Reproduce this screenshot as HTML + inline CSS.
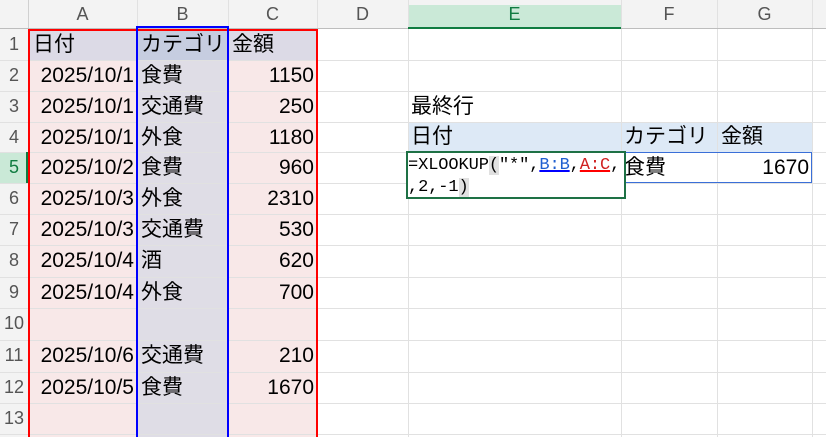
<!DOCTYPE html>
<html style="overflow:hidden;width:826px;height:437px"><head><meta charset="utf-8"><style>
*{margin:0;padding:0;box-sizing:border-box}
body{width:826px;height:437px;overflow:hidden;background:#fff;position:relative;font-family:"Liberation Sans","Noto Sans CJK JP",sans-serif;font-size:21px;color:#000}
div{position:absolute}
.vl{top:0;height:437px;width:1px;background:#e1e1e1}
.hl{left:0;width:826px;height:1px;background:#e1e1e1}
.rn{left:0;width:28px;text-align:center;font-size:18px;color:#555;line-height:31px}
.ch{top:0;height:29px;line-height:29px;text-align:center;font-size:18px;color:#555}
.t{line-height:31px;white-space:nowrap}
.r{text-align:right}
</style></head><body>
<div style="left:28px;top:29px;width:109px;height:408px;background:#f8e8e8"></div>
<div style="left:137px;top:29px;width:91px;height:408px;background:#dfdde6"></div>
<div style="left:228px;top:29px;width:89px;height:408px;background:#f8e8e8"></div>
<div style="left:28px;top:29px;width:289px;height:31px;background:#dcdae6"></div>
<div style="left:137px;top:29px;width:91px;height:31px;background:#c6cde0"></div>
<div style="left:408px;top:122px;width:404px;height:30px;background:#dde9f6"></div>
<div style="left:0;top:0;width:826px;height:29px;background:#f3f3f3"></div>
<div style="left:0;top:29px;width:28px;height:408px;background:#f3f3f3"></div>
<div style="left:408px;top:5px;width:213px;height:24px;background:#cae9d7"></div>
<div style="left:0;top:152px;width:28px;height:31px;background:#cae9d7"></div>
<div class="vl" style="left:28px;background:#d0d0d0"></div>
<div class="vl" style="left:137px"></div><div class="vl" style="left:228px"></div>
<div class="vl" style="left:317px"></div><div class="vl" style="left:408px"></div>
<div class="vl" style="left:621px"></div><div class="vl" style="left:717px"></div>
<div class="vl" style="left:812px"></div>
<div class="hl" style="top:60px"></div><div class="hl" style="top:91px"></div>
<div class="hl" style="top:122px"></div><div class="hl" style="top:152px"></div>
<div class="hl" style="top:183px"></div><div class="hl" style="top:214px"></div>
<div class="hl" style="top:245px"></div><div class="hl" style="top:277px"></div>
<div class="hl" style="top:308px"></div><div class="hl" style="top:340px"></div>
<div class="hl" style="top:372px"></div><div class="hl" style="top:403px"></div>
<div class="hl" style="top:434px"></div>
<div class="hl" style="top:28px;height:1px;background:#bdbdbd"></div>
<div style="left:408px;top:27px;width:213px;height:2px;background:#107c41"></div>
<div style="left:26px;top:152px;width:2px;height:31px;background:#107c41"></div>
<div class="ch" style="left:28px;width:109px">A</div>
<div class="ch" style="left:137px;width:91px">B</div>
<div class="ch" style="left:228px;width:89px">C</div>
<div class="ch" style="left:317px;width:91px">D</div>
<div class="ch" style="left:408px;width:213px;color:#107c41">E</div>
<div class="ch" style="left:621px;width:96px">F</div>
<div class="ch" style="left:717px;width:95px">G</div>
<div class="rn" style="top:29px">1</div><div class="rn" style="top:60px">2</div>
<div class="rn" style="top:91px">3</div><div class="rn" style="top:122px">4</div>
<div class="rn" style="top:152px;color:#107c41">5</div><div class="rn" style="top:183px">6</div>
<div class="rn" style="top:214px">7</div><div class="rn" style="top:245px">8</div>
<div class="rn" style="top:277px">9</div><div class="rn" style="top:308px">10</div>
<div class="rn" style="top:340px">11</div><div class="rn" style="top:372px">12</div>
<div class="rn" style="top:403px">13</div>
<div class="t" style="left:33px;top:29px">日付</div>
<div class="t r" style="left:28px;width:106px;top:60px">2025/10/1</div>
<div class="t r" style="left:28px;width:106px;top:91px">2025/10/1</div>
<div class="t r" style="left:28px;width:106px;top:122px">2025/10/1</div>
<div class="t r" style="left:28px;width:106px;top:152px">2025/10/2</div>
<div class="t r" style="left:28px;width:106px;top:183px">2025/10/3</div>
<div class="t r" style="left:28px;width:106px;top:214px">2025/10/3</div>
<div class="t r" style="left:28px;width:106px;top:245px">2025/10/4</div>
<div class="t r" style="left:28px;width:106px;top:277px">2025/10/4</div>
<div class="t r" style="left:28px;width:106px;top:340px">2025/10/6</div>
<div class="t r" style="left:28px;width:106px;top:372px">2025/10/5</div>
<div class="t" style="left:141px;top:29px">カテゴリ</div>
<div class="t" style="left:141px;top:60px">食費</div>
<div class="t" style="left:141px;top:91px">交通費</div>
<div class="t" style="left:141px;top:122px">外食</div>
<div class="t" style="left:141px;top:152px">食費</div>
<div class="t" style="left:141px;top:183px">外食</div>
<div class="t" style="left:141px;top:214px">交通費</div>
<div class="t" style="left:141px;top:245px">酒</div>
<div class="t" style="left:141px;top:277px">外食</div>
<div class="t" style="left:141px;top:340px">交通費</div>
<div class="t" style="left:141px;top:372px">食費</div>
<div class="t" style="left:232px;top:29px">金額</div>
<div class="t r" style="left:228px;width:86px;top:60px">1150</div>
<div class="t r" style="left:228px;width:86px;top:91px">250</div>
<div class="t r" style="left:228px;width:86px;top:122px">1180</div>
<div class="t r" style="left:228px;width:86px;top:152px">960</div>
<div class="t r" style="left:228px;width:86px;top:183px">2310</div>
<div class="t r" style="left:228px;width:86px;top:214px">530</div>
<div class="t r" style="left:228px;width:86px;top:245px">620</div>
<div class="t r" style="left:228px;width:86px;top:277px">700</div>
<div class="t r" style="left:228px;width:86px;top:340px">210</div>
<div class="t r" style="left:228px;width:86px;top:372px">1670</div>
<div class="t" style="left:411px;top:91px">最終行</div>
<div class="t" style="left:411px;top:121px">日付</div>
<div class="t" style="left:624px;top:121px">カテゴリ</div>
<div class="t" style="left:721px;top:121px">金額</div>
<div class="t" style="left:624px;top:152px">食費</div>
<div class="t r" style="left:717px;width:92px;top:152px">1670</div>
<div style="left:28px;top:29px;width:290px;height:420px;border:2px solid #f00;border-bottom:none"></div>
<div style="left:136px;top:26px;width:93px;height:420px;border:2px solid #00f;border-bottom:none"></div>
<div style="left:621px;top:152px;width:191px;height:31px;border:1px solid #3a6fd8"></div>
<div style="left:406px;top:151px;width:220px;height:48px;background:#fff;border:2px solid #1e7145"></div>
<div style="left:408px;top:155px;font-family:'Liberation Mono',monospace;font-size:17px;line-height:22px;white-space:pre;letter-spacing:-0.1px">=XLOOKUP<span style="background:#e0e0e0">(</span>"*",<span style="color:#1f5fd0;text-decoration:underline;text-decoration-color:#00f;text-decoration-thickness:2px">B:B</span>,<span style="color:#d02020;text-decoration:underline;text-decoration-color:#f00;text-decoration-thickness:2px">A:C</span>,
,2,-1<span style="background:#e0e0e0">)</span></div>
</body></html>
